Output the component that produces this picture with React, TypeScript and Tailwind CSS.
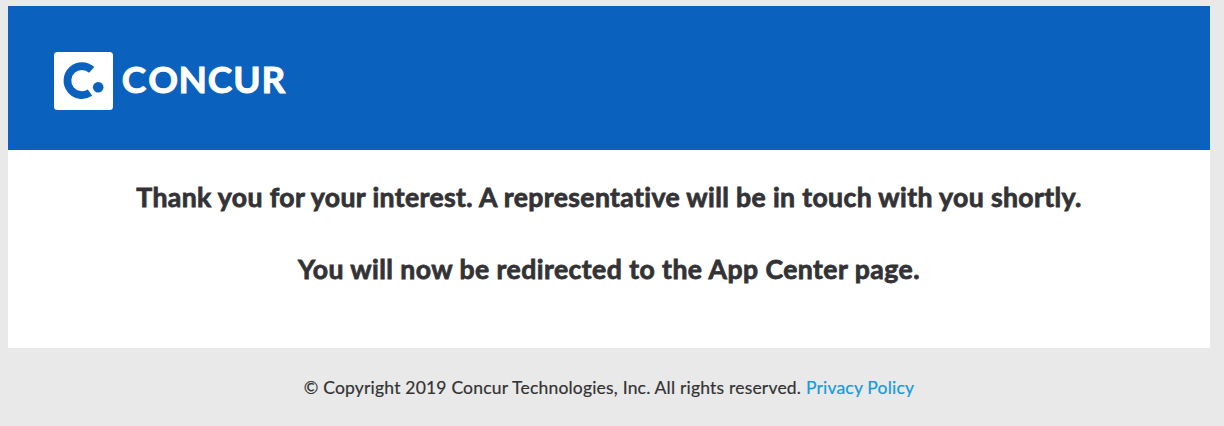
import React from "react";

function Logo() {
  return (
    <svg width="240" height="58" viewBox="0 0 240 58" className="shrink-0 overflow-visible" role="img" aria-label="CONCUR">
      <rect width="59" height="58" rx="3.5" fill="#fff" />
      <path d="M37.7 17.8A14.5 14.5 0 1 0 36 40.6" fill="none" stroke="#0a62be" strokeWidth="7.7" />
      <circle cx="44.2" cy="35.3" r="5.3" fill="#0a62be" />
      <text
        transform="scale(1.04 1)"
        x="65.1 90.7 119.8 147.8 172.3 199.6"
        y="41.3"
        fill="#fff"
        stroke="#fff"
        strokeWidth="0.9"
        fontSize="35.5"
        fontWeight="700"
        fontFamily="Lato, sans-serif"
      >
        CONCUR
      </text>
    </svg>
  );
}

export default function App() {
  return (
    <div className="flex h-[426px] flex-col bg-[#e9e9e9] pt-[6px] pr-[14px] pl-2 font-['Lato',sans-serif] [font-variant-ligatures:none]">
      <header className="flex h-36 shrink-0 items-start bg-[#0a62be] pt-[46px] pl-[46px]">
        <Logo />
      </header>
      <main className="flex h-[198px] shrink-0 flex-col items-center gap-9 bg-white pt-[29px] text-[26.6px] leading-9 font-bold whitespace-nowrap text-[#333336] [-webkit-text-stroke:0.8px_#333336]">
        <h1 className="tracking-[0.38px]">Thank you for your interest. A representative will be in touch with you shortly.</h1>
        <h2 className="tracking-[0.45px]">You will now be redirected to the App Center page.</h2>
      </main>
      <footer className="flex justify-center pt-[30px] text-[17.5px] leading-5 text-[#333] [-webkit-text-stroke:0.2px]">
        <p className="tracking-[0.2px] whitespace-nowrap">
          © Copyright 2019 Concur Technologies, Inc. All rights reserved. <a href="#" className="text-[#119bdf]">Privacy Policy</a>
        </p>
      </footer>
    </div>
  );
}
